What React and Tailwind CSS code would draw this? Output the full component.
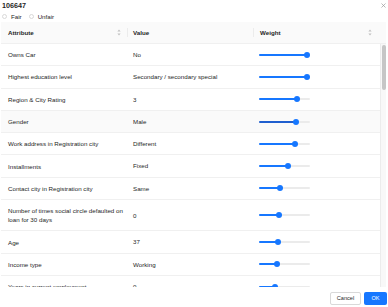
import React from "react";

const rows = [
  { attr: ["Owns Car"], value: "No", weight: 94 },
  { attr: ["Highest education level"], value: "Secondary / secondary special", weight: 94 },
  { attr: ["Region & City Rating"], value: "3", weight: 75 },
  { attr: ["Gender"], value: "Male", weight: 73, hover: true },
  { attr: ["Work address in Registration city"], value: "Different", weight: 71 },
  { attr: ["Installments"], value: "Fixed", weight: 57 },
  { attr: ["Contact city in Registration city"], value: "Same", weight: 41 },
  { attr: ["Number of times social circle defaulted on", "loan for 30 days"], value: "0", weight: 39 },
  { attr: ["Age"], value: "37", weight: 37 },
  { attr: ["Income type"], value: "Working", weight: 35 },
  { attr: ["Years in current employment"], value: "0", weight: 31 },
];

const SortIcon = () => (
  <svg width="4" height="7" viewBox="0 0 4 7" className="shrink-0">
    <path d="M2 0.5 L3.6 2.6 L0.4 2.6 Z" fill="#bfbfbf" />
    <path d="M2 6.5 L3.6 4.4 L0.4 4.4 Z" fill="#bfbfbf" />
  </svg>
);

const Radio = ({ label }) => (
  <label className="flex items-center gap-[4px]">
    <span className="w-[5px] h-[5px] rounded-full border border-[#d9d9d9] bg-white" />
    <span>{label}</span>
  </label>
);

// weight slider, value = percent of rail
const Slider = ({ value, hover }) => (
  <div className="relative w-[51px] h-[6px] flex items-center">
    <div className="w-full h-[2px] rounded-full bg-[#ebebeb]" />
    <div
      className={`absolute left-0 h-[2px] rounded-full ${hover ? "bg-[#1f5fcf]" : "bg-[#1677ff]"}`}
      style={{ width: `${value}%` }}
    />
    <div
      className="absolute w-[6px] h-[6px] -ml-[3px] rounded-full bg-[#1677ff]"
      style={{ left: `${value}%` }}
    />
  </div>
);

export default function App() {
  return (
    <div className="w-[388px] h-[307px] bg-white overflow-hidden text-[6.2px] text-[#262626] font-['Liberation_Sans',Arial,sans-serif]">
      {/* Title */}
      <div className="flex items-start justify-between h-[11px] pl-[2px] pr-[2px] pt-[1px]">
        <div className="text-[7.2px] leading-[9px] font-bold text-[#1f1f1f]">106647</div>
        <svg width="5" height="5" viewBox="0 0 5 5" className="mt-[1.5px]">
          <path d="M0.5 0.5 L4.5 4.5 M4.5 0.5 L0.5 4.5" stroke="#9a9a9a" strokeWidth="0.7" />
        </svg>
      </div>

      {/* Fair / Unfair */}
      <div className="flex items-center h-[11px] pl-[2px] gap-[7px]">
        <Radio label="Fair" />
        <Radio label="Unfair" />
      </div>

      {/* Table header */}
      <div className="flex ml-[1px] w-[385px] h-[22px] bg-[#fafafa] border-b border-[#f0f0f0] font-semibold text-[#1f1f1f]">
        <div className="w-[127px] flex items-center pl-[7px]">
          <span className="flex-1">Attribute</span>
          <SortIcon />
          <span className="ml-[6px] w-px h-[9px] bg-[#ececec]" />
        </div>
        <div className="w-[126px] flex items-center pl-[5px]">
          <span className="flex-1">Value</span>
          <span className="w-px h-[9px] bg-[#ececec]" />
        </div>
        <div className="w-[126px] flex items-center pl-[6px] pr-[8px]">
          <span className="flex-1">Weight</span>
          <SortIcon />
        </div>
        <div className="w-[6px]" />
      </div>

      {/* Table body */}
      <div className="flex ml-[1px] w-[385px] h-[243px] overflow-hidden">
        <div className="w-[379px]">
          {rows.map((r) => (
            <div
              key={r.attr[0]}
              className={`flex items-center border-b border-[#f0f0f0] ${r.attr.length > 1 ? "h-[31.3px]" : "h-[22.3px]"} ${r.hover ? "bg-[#fafafa]" : ""}`}
            >
              <div className="w-[127px] pl-[7px] leading-[9px] whitespace-nowrap">
                {r.attr.map((l) => (
                  <div key={l}>{l}</div>
                ))}
              </div>
              <div className="w-[126px] pl-[5px] whitespace-nowrap">{r.value}</div>
              <div className="w-[126px] pl-[5px]">
                <Slider value={r.weight} hover={r.hover} />
              </div>
            </div>
          ))}
        </div>
        <div className="w-[6px] h-full bg-[#f8f8f8] border-l border-[#ececec] pt-[1px] flex justify-center">
          <div className="w-[4px] h-[45px] rounded-full bg-[#c6c6c6]" />
        </div>
      </div>

      {/* Footer */}
      <div className="flex justify-end items-center gap-[3px] pr-[1px] pt-[5px]">
        <button className="w-[31px] h-[13px] rounded-[2px] border border-[#d9d9d9] bg-white text-[5.6px]">
          Cancel
        </button>
        <button className="w-[23px] h-[13px] rounded-[2px] bg-[#1677ff] text-white text-[5.6px]">
          OK
        </button>
      </div>
    </div>
  );
}
